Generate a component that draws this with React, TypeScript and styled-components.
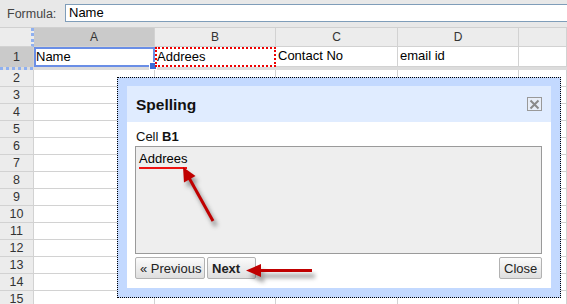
import React from "react";
import styled, { createGlobalStyle } from "styled-components";

const Global = createGlobalStyle`
  html, body { margin: 0; padding: 0; background: #fff; }
  body { font-family: "Liberation Sans", Arial, sans-serif; font-size: 13px; color: #000; }
  #root { width: 567px; height: 304px; overflow: hidden; }
`;

const Page = styled.div`
  position: relative;
  width: 567px;
  height: 304px;
  overflow: hidden;
  display: flex;
  flex-direction: column;
  & > * { flex-shrink: 0; }
`;

const FormulaBar = styled.div`
  height: 28px;
  box-sizing: border-box;
  background: #e8e8e8;
  border-bottom: 1px solid #d0d0d0;
  display: flex;
  align-items: center;
  padding-left: 7px;
  gap: 10px;
`;

const FormulaLabel = styled.span`
  color: #444;
  font-size: 12.5px;
  width: 48px;
`;

const FormulaInput = styled.div`
  flex: 1;
  height: 18px;
  box-sizing: border-box;
  background: #fff;
  border: 1px solid #7f9db9;
  border-right: none;
  padding-left: 3px;
  line-height: 16px;
  font-size: 13px;
  margin-top: -1px;
`;

const widths = [34, 121, 121, 122, 121];

const Row = styled.div<{ $h: number }>`
  display: flex;
  height: ${(p) => p.$h}px;
  flex-shrink: 0;
  box-sizing: border-box;
`;

const HeadCell = styled.div<{ $w?: number; $sel?: boolean }>`
  ${(p) => (p.$w ? `width: ${p.$w}px;` : "flex: 1;")}
  flex-shrink: 0;
  box-sizing: border-box;
  background: ${(p) => (p.$sel ? "#cacaca" : "#ececec")};
  border-right: 1px solid #d2d2d2;
  border-bottom: 1px solid #d2d2d2;
  color: #333;
  font-size: 12px;
  display: flex;
  align-items: center;
  justify-content: center;
`;

const CornerCell = styled(HeadCell)`
  border-right: 3px dotted #8fb0f0;
  background: #ececec;
`;

const RowNum = styled.div<{ $sel?: boolean; $freeze?: boolean }>`
  width: 34px;
  flex-shrink: 0;
  box-sizing: border-box;
  background: ${(p) => (p.$sel ? "#cacaca" : "#ececec")};
  border-right: 1px solid #d2d2d2;
  border-bottom: ${(p) => (p.$freeze ? "none" : "1px solid #d2d2d2")};
  color: #333;
  font-size: 12.5px;
  display: flex;
  align-items: center;
  justify-content: center;
`;

const Cell = styled.div<{ $w?: number; $mode?: "sel" | "spell" }>`
  ${(p) => (p.$w ? `width: ${p.$w}px;` : "flex: 1;")}
  flex-shrink: 0;
  position: relative;
  box-sizing: border-box;
  background: #fff;
  border-right: 1px solid #d2d2d2;
  border-bottom: 1px solid #d2d2d2;
  padding-left: 2px;
  font-size: 13px;
  line-height: 17px;
  white-space: nowrap;
  ${(p) =>
    p.$mode === "sel"
      ? `border: 2px solid #6a8ee6; padding-left: 0; line-height: 16px;`
      : ""}
  ${(p) =>
    p.$mode === "spell"
      ? `border: 2px dotted #ee0000; padding-left: 0; line-height: 16px;`
      : ""}
`;

const FillHandle = styled.span`
  position: absolute;
  right: -4px;
  bottom: -5px;
  width: 6px;
  height: 6px;
  background: #3c6bd6;
  border: 1px solid #fff;
`;

const FreezeBand = styled.div`
  display: flex;
  height: 3px;
  background: #dcdcdc;
`;

const FreezeHandle = styled.div`
  width: 33px;
  border-top: 3px dotted #8fb0f0;
  box-sizing: border-box;
`;

const Dialog = styled.div`
  position: absolute;
  left: 117px;
  top: 77px;
  width: 444px;
  height: 221px;
  box-sizing: border-box;
  border: 1px dotted #000;
  background: #c3d9ff;
  padding: 8px 9px 9px 9px;
  display: flex;
`;

const DialogInner = styled.div`
  flex: 1;
  background: #fff;
  display: flex;
  flex-direction: column;
`;

const TitleBar = styled.div`
  height: 36px;
  background: #e0ecff;
  display: flex;
  align-items: center;
  justify-content: space-between;
  padding: 0 9px 0 9px;
`;

const Title = styled.span`
  font-weight: bold;
  font-size: 15.5px;
  color: #111;
  margin-top: 1px;
`;

const CloseX = styled.span`
  width: 15px;
  height: 14px;
  box-sizing: border-box;
  border: 1px solid #999;
  display: flex;
  align-items: center;
  justify-content: center;
  background: #e8eef8;
`;

const Body = styled.div`
  flex: 1;
  display: flex;
  flex-direction: column;
  padding: 5px 9px 9px 8px;
`;

const CellLabel = styled.div`
  font-size: 13px;
  height: 19px;
  line-height: 19px;
  padding-left: 1px;
  color: #111;
`;

const TextBox = styled.div`
  height: 108px;
  box-sizing: border-box;
  background: #eeeeee;
  border: 1px solid #9a9a9a;
  padding: 4px 3px;
`;

const Misspelled = styled.span`
  display: inline-block;
  font-size: 13px;
  line-height: 14px;
  padding-bottom: 1px;
  border-bottom: 2px solid #ee1111;
`;

const ButtonRow = styled.div`
  display: flex;
  gap: 2px;
  margin-top: 3px;
  height: 22px;
`;

const Button = styled.button<{ $bold?: boolean; $w: number }>`
  width: ${(p) => p.$w}px;
  height: 22px;
  box-sizing: border-box;
  border: 1px solid #b2b2b2;
  border-radius: 2px;
  background: linear-gradient(#fbfbfb, #eaeaea 60%, #dedede);
  font-family: "Liberation Sans", Arial, sans-serif;
  font-size: 13px;
  font-weight: ${(p) => (p.$bold ? "bold" : "normal")};
  color: #222;
  padding: 0 4px;
  margin: 0;
  white-space: nowrap;
  text-align: left;
`;

const Spacer = styled.div`
  flex: 1;
`;

const Overlay = styled.svg`
  position: absolute;
  left: 0;
  top: 0;
  pointer-events: none;
`;

const rows = Array.from({ length: 14 }, (_, i) => i + 2);

export default function App() {
  return (
    <Page>
      <Global />
      <FormulaBar>
        <FormulaLabel>Formula:</FormulaLabel>
        <FormulaInput>Name</FormulaInput>
      </FormulaBar>
      <Row $h={19}>
        <CornerCell $w={34} />
        <HeadCell $w={widths[1]} $sel>A</HeadCell>
        <HeadCell $w={widths[2]}>B</HeadCell>
        <HeadCell $w={widths[3]}>C</HeadCell>
        <HeadCell $w={widths[4]}>D</HeadCell>
        <HeadCell />
      </Row>
      <Row $h={20}>
        <RowNum $sel $freeze>1</RowNum>
        <Cell $w={widths[1]} $mode="sel">
          Name
          <FillHandle />
        </Cell>
        <Cell $w={widths[2]} $mode="spell">Addrees</Cell>
        <Cell $w={widths[3]}>Contact No</Cell>
        <Cell $w={widths[4]}>email id</Cell>
        <Cell />
      </Row>
      <FreezeBand>
        <FreezeHandle />
      </FreezeBand>
      {rows.map((r) => (
        <Row $h={17} key={r}>
          <RowNum>{r}</RowNum>
          <Cell $w={widths[1]} />
          <Cell $w={widths[2]} />
          <Cell $w={widths[3]} />
          <Cell $w={widths[4]} />
          <Cell />
        </Row>
      ))}

      <Dialog>
        <DialogInner>
          <TitleBar>
            <Title>Spelling</Title>
            <CloseX>
              <svg width="11" height="11" viewBox="0 0 11 11">
                <path d="M1.5 1.5 L9.5 9.5 M9.5 1.5 L1.5 9.5" stroke="#8a8a8a" strokeWidth="2" />
              </svg>
            </CloseX>
          </TitleBar>
          <Body>
            <CellLabel>
              Cell <b>B1</b>
            </CellLabel>
            <TextBox>
              <Misspelled>Addrees</Misspelled>
            </TextBox>
            <ButtonRow>
              <Button $w={70}>« Previous</Button>
              <Button $w={49} $bold>Next</Button>
              <Spacer />
              <Button $w={43}>Close</Button>
            </ButtonRow>
          </Body>
        </DialogInner>
      </Dialog>

      <Overlay width="567" height="304" viewBox="0 0 567 304">
        <defs>
          <filter id="blur" x="-50%" y="-50%" width="200%" height="200%">
            <feGaussianBlur stdDeviation="2" />
          </filter>
        </defs>
        <g filter="url(#blur)" opacity="0.55" transform="translate(3 5)">
          <line x1="213" y1="221" x2="188" y2="176" stroke="#555" strokeWidth="4" />
          <polygon points="183,167 195.5,176 184,182.5" fill="#555" />
          <line x1="312" y1="271" x2="256" y2="271" stroke="#555" strokeWidth="4" />
          <polygon points="246,271 261,264 261,278" fill="#555" />
        </g>
        <line x1="213" y1="221" x2="188" y2="176" stroke="#c00000" strokeWidth="3" />
        <polygon points="183,167 195.5,176 184,182.5" fill="#c00000" />
        <line x1="312" y1="270.5" x2="256" y2="270.5" stroke="#c00000" strokeWidth="3" />
        <polygon points="246,270.5 261,264 261,277" fill="#c00000" />
      </Overlay>
    </Page>
  );
}
